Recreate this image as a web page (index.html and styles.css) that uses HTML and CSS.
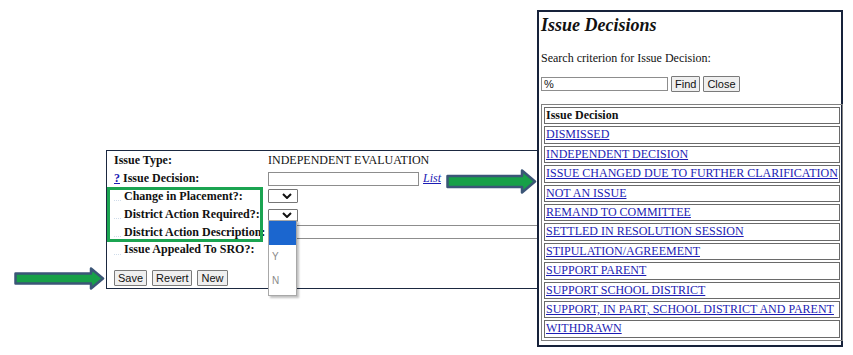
FILE: index.html
```html
<!DOCTYPE html>
<html lang="en">
<head>
  <meta charset="UTF-8" />
  <title>Issue Decision</title>
  <link rel="stylesheet" href="styles.css">
</head>
<body>

  <!-- Issue form -->
  <div class="form-panel">
    <div class="form-grid">
      <div class="label">Issue Type:</div>
      <div class="value">INDEPENDENT EVALUATION</div>

      <div class="label"><a href="#" class="help">?</a> Issue Decision:</div>
      <div class="value"><span class="text-box decision-box"></span><a href="#" class="list-link">List</a></div>

      <div class="label indent"><span class="spacer"></span>Change in Placement?:</div>
      <div class="value"><span class="select-box"><svg width="10" height="6" viewBox="0 0 10 6"><path d="M1 1 L5 5 L9 1" fill="none" stroke="#111" stroke-width="2"/></svg></span></div>

      <div class="label indent"><span class="spacer"></span>District Action Required?:</div>
      <div class="value"><span class="select-box open"><svg width="10" height="6" viewBox="0 0 10 6"><path d="M1 1 L5 5 L9 1" fill="none" stroke="#111" stroke-width="2"/></svg></span></div>

      <div class="label indent"><span class="spacer"></span>District Action Description:</div>
      <div class="value"><span class="text-box desc-box"></span></div>

      <div class="label indent"><span class="spacer"></span>Issue Appealed To SRO?:</div>
      <div class="value"></div>
    </div>

    <div class="buttons">
      <button class="btn">Save</button>
      <button class="btn">Revert</button>
      <button class="btn">New</button>
    </div>
  </div>

  <!-- open dropdown list -->
  <div class="dropdown">
    <div class="option selected"></div>
    <div class="option">Y</div>
    <div class="option">N</div>
  </div>

  <!-- annotations -->
  <div class="highlight"></div>
  <svg class="arrow arrow-list" width="91" height="25" viewBox="0 0 91 25">
    <polygon points="1.5,7 76,7 76,1.5 89,12.5 76,23.5 76,18 1.5,18" fill="#17a048" stroke="#3b5677" stroke-width="2.5" stroke-linejoin="round"/>
  </svg>
  <svg class="arrow arrow-save" width="91" height="23" viewBox="0 0 91 23">
    <polygon points="1.5,6.5 77,6.5 77,1.5 89,11.5 77,21.5 77,16.5 1.5,16.5" fill="#17a048" stroke="#3b5677" stroke-width="2.5" stroke-linejoin="round"/>
  </svg>

  <!-- Issue Decisions lookup -->
  <div class="lookup">
    <div class="lookup-title">Issue Decisions</div>
    <p class="lookup-hint">Search criterion for Issue Decision:</p>
    <div class="search-row">
      <span class="text-box search-box">%</span>
      <button class="btn">Find</button>
      <button class="btn">Close</button>
    </div>
    <table class="results">
      <tr><th>Issue Decision</th></tr>
      <tr><td><a href="#">DISMISSED</a></td></tr>
      <tr><td><a href="#">INDEPENDENT DECISION</a></td></tr>
      <tr><td><a href="#">ISSUE CHANGED DUE TO FURTHER CLARIFICATION</a></td></tr>
      <tr><td><a href="#">NOT AN ISSUE</a></td></tr>
      <tr><td><a href="#">REMAND TO COMMITTEE</a></td></tr>
      <tr><td><a href="#">SETTLED IN RESOLUTION SESSION</a></td></tr>
      <tr><td><a href="#">STIPULATION/AGREEMENT</a></td></tr>
      <tr><td><a href="#">SUPPORT PARENT</a></td></tr>
      <tr><td><a href="#">SUPPORT SCHOOL DISTRICT</a></td></tr>
      <tr><td><a href="#">SUPPORT, IN PART, SCHOOL DISTRICT AND PARENT</a></td></tr>
      <tr><td><a href="#">WITHDRAWN</a></td></tr>
    </table>
  </div>

</body>
</html>
```

FILE: styles.css
```css
body {
  margin: 0;
  background-color: #fff;
  font-family: 'Liberation Serif', 'Times New Roman', serif;
  font-size: 12px;
  color: #111;
  position: relative;
  width: 853px;
  height: 355px;
  overflow: hidden;
}

a {
  color: #1c1cb4;
}

.form-panel {
  margin: 150px 0 0 106px;
  width: 440px;
  height: 139px;
  box-sizing: border-box;
  border: 1px solid #1b2840;
  padding: 1px 6px 0 7px;
}

.form-grid {
  display: grid;
  grid-template-columns: 154px 1fr;
  grid-auto-rows: 17.8px;
  align-items: center;
}

.label {
  font-weight: bold;
  white-space: nowrap;
  display: flex;
  align-items: center;
}

.value {
  display: flex;
  align-items: center;
  white-space: nowrap;
}

.help {
  margin-right: 3px;
  font-weight: bold;
}

.spacer {
  flex-shrink: 0;
  width: 7px;
  height: 1px;
  margin: 8px 3px 0 0;
  border-bottom: 1px dotted #cfdcea;
}

.text-box {
  display: inline-block;
  box-sizing: border-box;
  height: 14px;
  border: 1px solid #8d8d8d;
  background: #fff;
}

.decision-box {
  width: 151px;
}

.desc-box {
  width: 280px;
}

.list-link {
  font-style: italic;
  margin-left: 4px;
}

.select-box {
  display: flex;
  justify-content: flex-end;
  align-items: center;
  box-sizing: border-box;
  width: 30px;
  height: 14px;
  padding-right: 5px;
  border: 1px solid #767676;
  border-radius: 1px;
  background: #fff;
}

.select-box.open {
  height: 13px;
  margin-top: 2px;
}

.buttons {
  display: flex;
  gap: 5px;
  margin-top: 11px;
}

.btn {
  font-family: 'Liberation Sans', Arial, sans-serif;
  font-size: 11px;
  height: 16px;
  padding: 0 3px;
  border: 1px solid #7a7a7a;
  border-radius: 1px;
  background-color: #efefef;
  color: #111;
}

.dropdown {
  position: absolute;
  left: 268px;
  top: 220px;
  width: 29px;
  height: 76px;
  box-sizing: border-box;
  border: 1px solid #a8a8a8;
  background: #fff;
  box-shadow: 2px 2px 2px rgba(0,0,0,0.25);
  font-family: 'Liberation Sans', Arial, sans-serif;
  font-size: 10px;
  color: #8a8a8a;
}

.option {
  height: 24px;
  line-height: 24px;
  padding-left: 3px;
}

.option.selected {
  background-color: #1b66cf;
}

.highlight {
  position: absolute;
  left: 107px;
  top: 187px;
  width: 156px;
  height: 55px;
  box-sizing: border-box;
  border: 3px solid #1ba451;
}

.arrow {
  position: absolute;
}

.arrow-list {
  left: 446px;
  top: 169px;
}

.arrow-save {
  left: 14px;
  top: 267px;
}

.lookup {
  position: absolute;
  left: 537px;
  top: 10px;
  width: 306px;
  height: 337px;
  box-sizing: border-box;
  border: 2px solid #17223a;
  background: #fff;
  padding: 2px 2px;
}

.lookup-title {
  font-size: 18px;
  font-weight: bold;
  font-style: italic;
  line-height: 22px;
}

.lookup-hint {
  margin: 14px 0 0;
  line-height: 16px;
}

.search-row {
  display: flex;
  align-items: center;
  gap: 3px;
  margin-top: 10px;
}

.search-box {
  width: 127px;
  font-family: 'Liberation Sans', Arial, sans-serif;
  font-size: 11px;
  line-height: 12px;
  padding-left: 2px;
}

.results {
  width: 100%;
  margin-top: 12px;
  border: 1px solid #808080;
  border-spacing: 2px;
}

.results th,
.results td {
  border: 1px solid #6a6a6a;
  padding: 0 1px;
  line-height: 15.4px;
  text-align: left;
  white-space: nowrap;
}
```
